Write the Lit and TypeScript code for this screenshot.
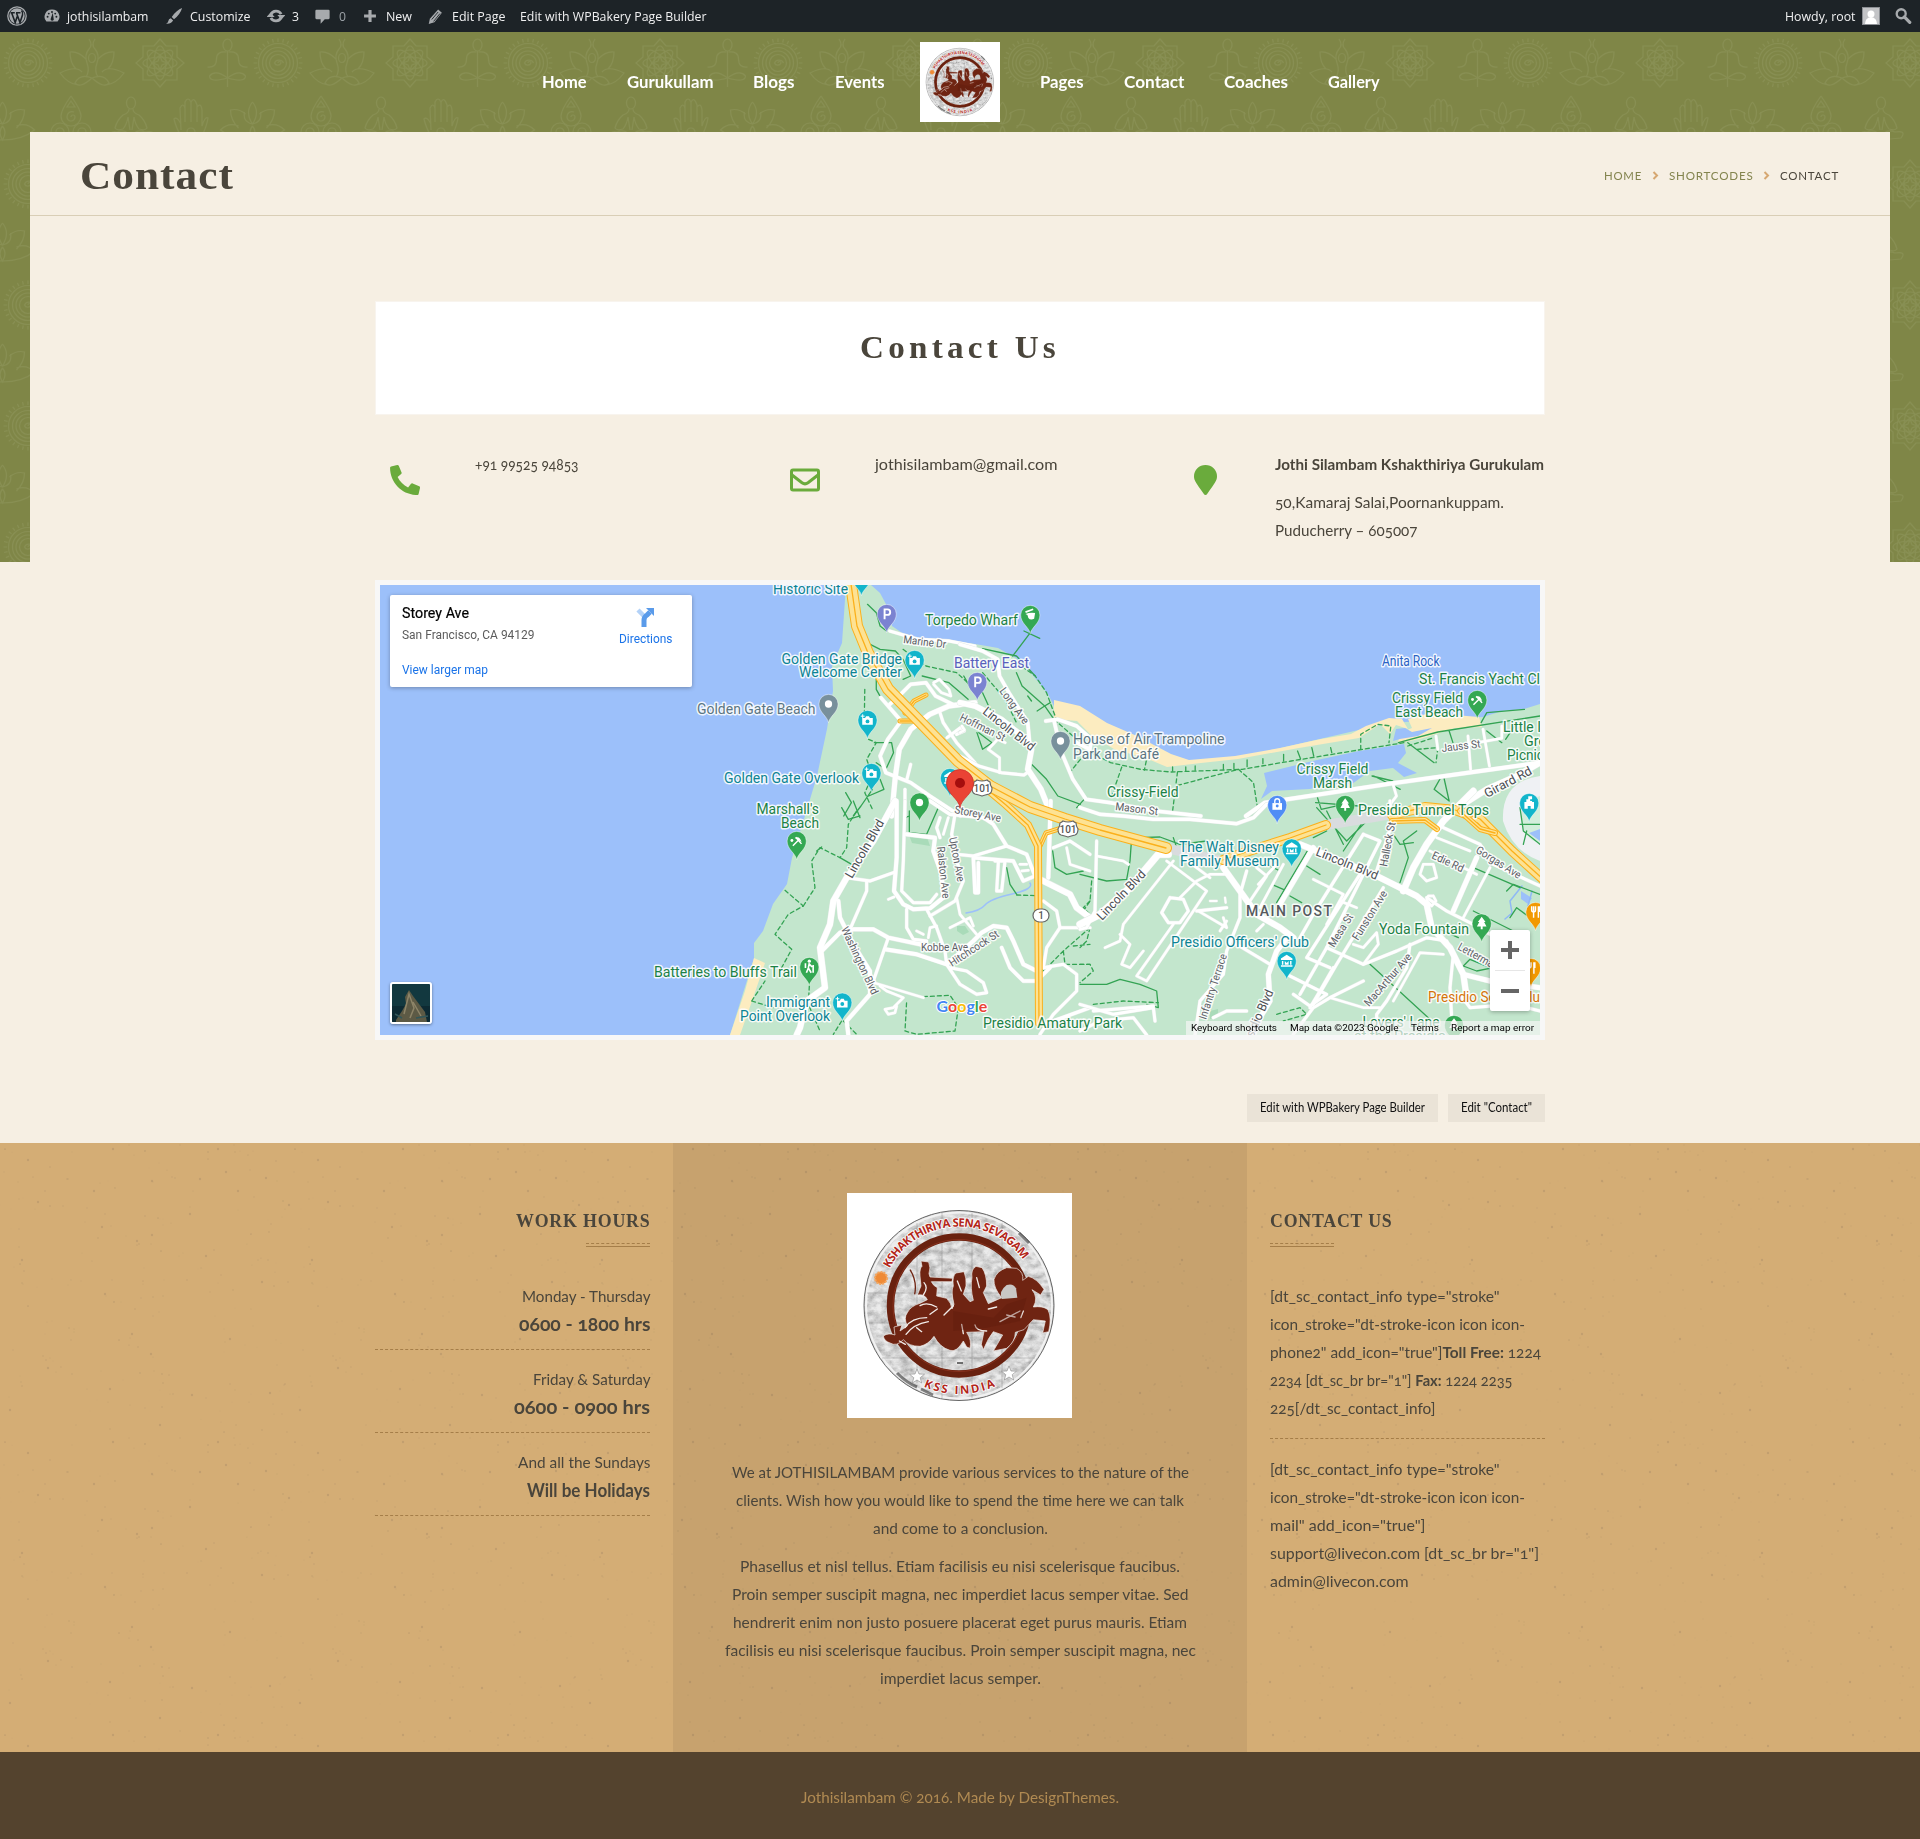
import { LitElement, html, svg, css } from "lit";
import { customElement, property } from "lit/decorators.js";

/** One line of text condensed or widened to a given measure. */
@customElement("fit-text")
class FitText extends LitElement {
  @property({ type: Number }) w = 100;
  static styles = css`
    :host { display: inline-block; white-space: pre; text-align: left; }
    .inner { display: inline-block; transform-origin: 0 50%; }
  `;
  render() {
    return html`<span class="inner"><slot></slot></span>`;
  }
  firstUpdated() {
    const el = this.renderRoot.querySelector(".inner") as HTMLElement;
    const natural = el.getBoundingClientRect().width;
    this.style.width = this.w + "px";
    if (natural > 0) el.style.transform = `scaleX(${this.w / natural})`;
  }
}

const fit = (text: unknown, w: number) => html`<fit-text .w=${w}>${text}</fit-text>`;

@customElement("seal-logo")
class SealLogo extends LitElement {
  static styles = css`
    :host { display: block; }
    svg { display: block; width: 100%; height: 100%; }
    .arc { font: 700 11.5px "Open Sans", "Noto Sans", sans-serif; fill: #b3261a; stroke: #fff; stroke-width: 1.6px; paint-order: stroke; }
  `;
  render() {
    return html`<svg viewBox="0 0 225 225">
      <defs>
        <filter id="stone" x="0" y="0" width="100%" height="100%">
          <feTurbulence type="fractalNoise" baseFrequency="0.11 0.16" numOctaves="5" seed="8" />
          <feColorMatrix values="0.9 0.9 0 0 -0.2  0.9 0.9 0 0 -0.2  0.9 0.9 0 0 -0.2  0 0 0 0 1" />
          <feComposite in2="SourceGraphic" operator="in" />
        </filter>
        <path id="top" d="M33.5 112 A78.5 78.5 0 0 1 190.5 112" />
        <path id="bottom" d="M23 112 A89 89 0 0 0 201 112" />
      </defs>
      <rect width="225" height="225" fill="#fff" />
      <circle cx="112" cy="112.5" r="95" fill="#bbb" filter="url(#stone)" />
      <circle cx="112" cy="112.5" r="95" fill="rgba(205,205,205,.4)" stroke="#666" stroke-width="1" />
      <circle cx="112" cy="112.5" r="93" fill="none" stroke="#f2f2f2" stroke-width="2" />
      <g fill="none" stroke="#666" stroke-width=".5" opacity=".6">
        <path d="M20 100 H205 M22 130 H202 M35 165 H188 M70 30 V190 M95 20 V205 M125 20 V205 M155 30 V195" />
      </g>
      <path d="M172 40L182 50M74 196L86 202M50 180Q60 190 70 194" stroke="#333" stroke-width="3" fill="none" opacity=".6" />
      <circle cx="112" cy="112.5" r="68.5" fill="none" stroke="#69210f" stroke-width="7.5" />
      <circle cx="112" cy="112.5" r="66" fill="none" stroke="#86301c" stroke-width="1" />
      <text class="arc"><textPath href="#top" startOffset="38" textLength="160">KSHAKTHIRIYA SENA SEVAGAM</textPath></text>
      <text class="arc"><textPath href="#bottom" startOffset="103" textLength="74">KSS INDIA</textPath></text>
      <circle cx="34" cy="85" r="6" fill="#ef8a35" stroke="#f3a55e" stroke-width="2" stroke-dasharray="2 1" />
      <path d="M183 65 A6.500 6.500 0 1 0 190 76 A6 6 0 0 1 183 65Z" fill="#f5f5f5" />
      <g fill="#fff" stroke="#888" stroke-width=".6">
        <path d="M70 176 l2 5 5.500 .2 -4.300 3.500 1.500 5.300 -4.700 -3 -4.700 3 1.500 -5.300 -4.300 -3.500 5.500 -.2Z" />
        <path d="M162 173 l2 5 5.500 .2 -4.300 3.500 1.500 5.300 -4.700 -3 -4.700 3 1.500 -5.300 -4.300 -3.500 5.500 -.2Z" />
      </g>
      <g transform="translate(-27 -22) scale(.33333)">
        <path fill="#6f2412" stroke="#f3eeec" stroke-width="2" stroke-linejoin="round"
          d="M190 495 Q205 484 225 492 L222 468 L246 462 L240 480 L262 465 Q250 440 262 425 Q272 405 300 397 L322 386 Q314 368 292 372 L303 345 L300 315 Q298 292 306 286 L303 270 L326 273 Q333 290 327 308 L330 318 L398 322 L396 332 L334 332 Q340 345 352 350 L350 375 L380 382 Q394 396 396 414 L402 400 Q392 360 400 345 Q396 315 408 306 L432 302 Q440 320 438 345 L430 370 L450 392 L460 388 Q450 350 456 320 Q452 296 468 286 L486 290 Q500 310 500 345 L490 365 L505 398 L545 380 Q520 350 522 325 Q530 300 560 290 L590 292 Q612 304 608 328 L625 316 Q650 322 672 355 L662 372 L636 356 Q656 380 640 408 Q668 404 684 416 Q696 440 686 482 L668 486 L676 450 L640 446 L612 476 L586 484 Q586 512 560 532 L520 540 L548 492 L520 482 Q505 500 490 536 L484 520 L492 482 L440 484 Q456 508 450 532 L440 528 L430 510 Q410 545 390 538 Q360 530 342 496 Q326 520 300 526 Q266 526 250 506 Q230 528 210 516 Q192 510 190 495Z" />
        <path d="M270 296 Q292 330 284 370" fill="none" stroke="#6f2412" stroke-width="4" />
        <path d="M560 342Q580 336 588 352L592 380 545 384Q536 360 560 342Z" fill="#c9c7c5" />
        <g fill="none" stroke="#f1ebe8" stroke-width="4" stroke-linecap="round">
          <path d="M255 470 Q275 440 320 440 M258 490 Q280 460 325 452 M300 404 Q320 392 350 408 M330 430 L352 414 M372 432 L400 404 M540 452 L600 420 M560 432 L585 438 M505 414 L530 408 M425 460 L430 488 M465 462 Q468 480 500 480 M290 470 L305 482 M312 335 Q326 350 310 372 M610 420 L602 440 M412 330 L424 360 M470 320 L478 350 M256 520 L238 510" />
        </g>
        <path fill="#5b1a0c" d="M400 420 L520 440 L560 400 L620 380 L600 450 L500 470 L400 480Z" opacity=".35" />
      </g>
      <path d="M110 170 h6" stroke="#444" stroke-width="1.500" />
    </svg>`;
  }
}

/* ---------- map ---------- */

interface Road { w: number; d: string; }
const W = "#ffffff";

const roadsNW: Road[] = [
  { w: 3, d: "1568 210 1500 195 1420 190 1345 165" },
  { w: 5, d: "1568 380 1500 390 1450 415 1400 460 1370 520 1360 600 1350 720" },
  { w: 3.5, d: "1322 365 1375 435 1340 490 1320 540 1335 590 1400 620 1450 660 1530 720" },
  { w: 3.5, d: "1345 385 1365 365 1400 325 1440 320 1465 360 1510 385" },
  { w: 2.5, d: "1460 320 1475 310 1500 340 1505 360 1480 350 1460 325" },
  { w: 3, d: "1385 720 1385 640" }, { w: 3, d: "1400 565 1390 610" },
  { w: 3, d: "1475 405 1485 440 1520 500 1568 560" },
  { w: 3, d: "1495 485 1530 455 1540 465 1520 475" },
];
const roadsNE: Road[] = [
  { w: 5.5, d: "0 380 40 390 110 430 165 480 190 520 180 580 215 640 240 710" },
  { w: 3.5, d: "0 205 60 225 100 250 105 300 130 350 180 440 185 500" },
  { w: 3.5, d: "228 435 260 430 310 450 350 490 345 520 310 500" },
  { w: 3.5, d: "250 435 270 530 300 610 335 670 400 680 520 705 640 720" },
  { w: 3, d: "0 540 50 570 110 590 170 597 185 585" },
  { w: 2.5, d: "105 590 105 545 75 520 100 490 120 500" },
  { w: 4, d: "760 720 810 680 870 670 1150 622 1541 560" },
  { w: 6, d: "1330 690 1400 640 1480 600 1541 560" },
  { w: 2.5, d: "1350 480 1357 580" }, { w: 2.5, d: "1390 460 1407 570" },
  { w: 2.5, d: "1265 480 1270 520" }, { w: 2.5, d: "1300 515 1440 487 1440 450" },
  { w: 2.5, d: "1150 622 1160 660 1140 690 1145 720" }, { w: 2.5, d: "0 470 12 462 5 450" },
];
const roadsSW: Road[] = [
  { w: 6, d: "765 0 700 120 620 230 580 300 570 370 540 440 550 520 555 560 500 600 480 680 470 702" },
  { w: 4, d: "770 0 770 170 762 270 790 310 820 325 870 322 910 290 905 220 880 150 885 110 800 100" },
  { w: 3, d: "795 0 790 180 785 270 820 305 870 305 890 280" },
  { w: 3.5, d: "870 0 930 40 1030 50 1060 70 1100 135 1160 160 1185 225 1150 240 1120 180 1000 170 1005 275 1015 275 1015 185" },
  { w: 3, d: "1065 180 1095 180 1085 270 1070 270 1075 185" },
  { w: 3, d: "945 40 935 100 950 160 1000 165 1100 135" },
  { w: 3, d: "940 150 970 240 945 300 870 345" },
  { w: 3, d: "900 50 890 80 900 110" }, { w: 2.5, d: "925 50 910 100" },
  { w: 3, d: "620 230 690 240 760 215" }, { w: 3, d: "680 240 680 270 630 385" },
  { w: 4, d: "595 300 600 350 640 430 690 510 690 580 620 660 625 702" },
  { w: 4, d: "545 450 600 395 640 385 700 385 745 410 840 430 900 445" },
  { w: 3, d: "745 410 700 540" },
  { w: 4, d: "735 445 830 460 920 490 1000 420 1025 395 1060 375 1100 380 1120 420 1150 490 1190 510" },
  { w: 3, d: "800 325 800 380 820 415 860 420" },
  { w: 3, d: "860 325 890 380 915 450 920 490 960 550 1010 580 1040 575 1030 545 980 510 930 500" },
  { w: 6, d: "1200 235 1290 280 1310 320 1350 350" },
  { w: 3, d: "1210 300 1250 330 1260 380 1220 440 1210 500" }, { w: 3, d: "1260 380 1350 380" },
  { w: 2.5, d: "950 290 960 340 1010 400" }, { w: 2.5, d: "930 380 990 350 1000 375" },
  { w: 2.5, d: "865 410 870 380 890 375" }, { w: 2.5, d: "830 390 850 400" },
  { w: 2.5, d: "700 545 850 590" }, { w: 4, d: "1232 0 1225 230" },
  { w: 3, d: "1240 140 1290 120 1350 160" }, { w: 2.5, d: "1280 140 1290 190 1350 210" },
  { w: 3, d: "1210 500 1270 490 1310 520 1310 570 1240 640 1200 700" },
  { w: 3.5, d: "1240 660 1350 620" }, { w: 3.5, d: "1085 440 1110 500 1150 540 1190 540 1230 500" },
  { w: 2.5, d: "720 555 740 570 790 590 760 620 735 625 745 640 765 635 770 615" },
  { w: 2.5, d: "1140 190 1160 190" }, { w: 2.5, d: "1145 210 1165 208" }, { w: 2.5, d: "745 295 762 288" },
];
const roadsSE: Road[] = [
  { w: 3.5, d: "0 20 60 40 130 45 220 55 330 55 470 68 520 50 560 10" },
  { w: 7, d: "265 160 235 160 205 195 150 260 60 340 0 370" },
  { w: 6, d: "430 200 480 270 530 340 600 380 640 410" },
  { w: 5, d: "700 140 600 310" },
  { w: 6, d: "660 130 760 170 890 225 1010 285 1040 310 1055 380 1110 440 1150 520 1160 590" },
  { w: 5, d: "1150 520 1230 540 1380 560" },
  { w: 6.5, d: "1180 -30 1090 60 1040 130 1000 200 970 270" },
  { w: 5, d: "630 400 590 450 565 520 570 600 540 650 520 702" },
  { w: 3, d: "50 120 45 330 20 380 0 385" }, { w: 2.5, d: "50 165 130 180 145 190" },
  { w: 2.5, d: "280 180 130 370 120 420 75 440" }, { w: 2.5, d: "260 180 380 270 200 540 170 525 280 370" },
  { w: 2.5, d: "310 170 390 230" }, { w: 2.5, d: "300 290 350 240 390 220 440 220" },
  { w: 3, d: "270 290 310 295 325 330 300 365 265 365 245 335 270 290" },
  { w: 2.5, d: "120 400 150 430 125 490 150 500 190 450" },
  { w: 3, d: "500 210 480 280 480 350 440 450 430 520 360 600 345 702" },
  { w: 2.5, d: "530 200 560 225 510 300" }, { w: 2.5, d: "610 190 540 320" }, { w: 2.5, d: "590 190 535 250" },
  { w: 3, d: "850 100 900 120 870 180 740 440 660 580" }, { w: 3, d: "850 100 700 340 660 410" },
  { w: 3, d: "840 220 680 470 750 500" }, { w: 3, d: "760 500 720 570 690 620" },
  { w: 2.5, d: "780 300 830 320" }, { w: 3, d: "910 260 770 490 700 610" },
  { w: 2.5, d: "700 235 790 280 740 370" }, { w: 3, d: "620 520 740 580 690 615 640 580" },
  { w: 3, d: "470 430 570 490" }, { w: 3, d: "740 440 850 490 950 450 1040 410 1100 420 1120 460 1110 560 1115 650" },
  { w: 3, d: "990 430 980 500 920 600 890 640 890 702" }, { w: 2.5, d: "820 430 850 440 890 395 895 430 850 490" },
  { w: 2.5, d: "1050 150 1190 220" }, { w: 3, d: "1090 80 1200 130 1240 190 1380 255" },
  { w: 2.5, d: "1070 110 1170 150" },
  { w: 5, d: "1190 170 1120 330" }, { w: 2.5, d: "1230 200 1150 350" },
  { w: 3, d: "1040 290 1100 330 1180 370 1230 400" },
  { w: 2.5, d: "1030 190 1060 190 1070 230 1040 240 1020 220 1030 190" },
  { w: 2.5, d: "1060 285 1068 300 1055 315 1040 300 1045 285 1060 285" },
  { w: 3, d: "1140 580 1170 620 1300 610 1380 630" },
  { w: 2.5, d: "750 590 850 620 900 620" }, { w: 2.5, d: "940 600 990 510 1020 455 1090 460" },
  { w: 3, d: "0 610 100 640 220 620 225 660" }, { w: 3, d: "0 690 60 660 160 650 200 702" },
  { w: 3, d: "40 630 220 615" }, { w: 3, d: "640 700 700 620 750 590 850 540" },
  { w: 3, d: "350 330 440 320" }, { w: 2.5, d: "355 330 440 380 430 350" }, { w: 2.5, d: "440 360 420 390" },
  { w: 3, d: "400 650 440 630 500 630" }, { w: 3, d: "930 0 935 70 890 210" },
  { w: 2.5, d: "550 370 530 390" }, { w: 2, d: "390 300 410 300" }, { w: 2, d: "435 290 437 305" },
];

const trails: { k: string; dash: boolean; d: string }[] = [
  { k: "nw", dash: false, d: "1287 85 1310 110 1320 150 1337 165" },
  { k: "nw", dash: false, d: "1285 200 1320 220 1360 225 1380 250 1400 300 1380 310" },
  { k: "nw", dash: true, d: "1380 220 1440 270 1520 290 1568 340" },
  { k: "nw", dash: false, d: "1430 300 1500 320 1550 370" },
  { k: "nw", dash: true, d: "1280 340 1279 410" },
  { k: "nw", dash: true, d: "1290 490 1310 500 1285 550 1300 600 1280 650 1300 700" },
  { k: "nw", dash: false, d: "1305 500 1350 500 1355 530 1335 580 1310 560" },
  { k: "nw", dash: false, d: "1230 650 1245 680 1225 720 M1300 640 1270 690 1250 720 M1320 610 1330 640 1290 660" },
  { k: "nw", dash: false, d: "1310 310 1310 340 1322 365" },
  { k: "ne", dash: false, d: "187 170 140 240 M170 165 212 187 M60 218 150 240 200 300" },
  { k: "ne", dash: false, d: "150 290 165 330 225 390 250 430 M225 390 205 405 M180 360 190 375 M225 390 240 380" },
  { k: "ne", dash: true, d: "150 260 200 300 230 350 256 430" },
  { k: "ne", dash: true, d: "60 290 120 370 150 440" },
  { k: "ne", dash: false, d: "10 300 30 340 60 350 80 400 M45 470 60 520 85 500 50 470" },
  { k: "ne", dash: true, d: "250 430 350 530 400 560 480 580 560 588 750 580 880 555 1070 520 1180 500" },
  { k: "ne", dash: true, d: "430 573 400 670 M578 588 565 705 M578 628 740 580 780 620 790 690 M495 555 490 582 M320 550 295 585" },
  { k: "ne", dash: true, d: "1065 520 1065 475 1110 445 1145 450 1140 500" },
  { k: "ne", dash: false, d: "565 585 565 573 M600 585 600 573 M625 583 625 570 M700 580 700 565 M728 578 728 562 M763 572 763 552 M805 563 805 548 M860 555 860 535 M905 548 897 525 M940 540 935 515 M988 530 985 515" },
  { k: "ne", dash: false, d: "190 565 230 610 260 660 320 685 M330 670 310 695" },
  { k: "ne", dash: false, d: "1165 500 1270 468 1541 420 M1385 440 1400 410 1500 400 M1400 465 1440 500 M1480 440 1450 490 M1300 465 1310 500 M1190 500 1260 560" },
  { k: "ne", dash: true, d: "1190 510 1260 485 M1215 520 1270 515 1265 560" },
  { k: "ne", dash: false, d: "1280 600 1260 640 1300 675 1285 600 M1100 600 1170 640 M1095 600 1150 615 M950 665 960 700 1040 680 M945 680 1060 690" },
  { k: "sw", dash: true, d: "435 268 490 315 445 340 405 400 455 445 425 500" },
  { k: "sw", dash: true, d: "490 315 525 260 515 180 540 140 600 170 620 140 625 70 650 30" },
  { k: "sw", dash: false, d: "605 20 625 55 660 45 M660 50 640 0 M530 150 545 138 M600 170 635 190" },
  { k: "sw", dash: true, d: "508 555 505 610 540 690 M605 660 580 700 M610 660 650 700 M335 600 375 540 M335 600 400 620" },
  { k: "sw", dash: true, d: "850 587 930 583 955 620 945 690 830 700 795 690 800 600" },
  { k: "sw", dash: false, d: "808 30 808 95 860 100 897 15 850 -5 M795 50 808 45" },
  { k: "sw", dash: false, d: "1100 200 1110 250 1130 280" }, { k: "sw", dash: true, d: "1130 282 1190 284" },
  { k: "sw", dash: false, d: "1238 150 1245 200 1280 220 1330 210" },
  { k: "sw", dash: true, d: "1350 380 1270 450 1210 510 M1270 450 1275 490 1350 490 M1350 300 1330 320 1350 340 M1300 435 1350 430" },
  { k: "se", dash: false, d: "0 220 80 240 140 235 150 180 155 110 M175 110 240 108 300 130 380 120 M280 110 290 140" },
  { k: "se", dash: true, d: "35 240 30 300 10 330 0 320 M30 380 20 420 0 440 M0 490 30 490 40 510 0 545" },
  { k: "se", dash: false, d: "0 550 80 550 120 535 180 550 230 570 235 620 200 610" },
  { k: "se", dash: true, d: "40 610 130 600 235 605" },
  { k: "se", dash: false, d: "685 145 590 305 M700 145 730 155 M680 195 720 220 M575 250 610 265 M630 285 665 305 M740 30 790 130 M710 20 800 120 900 20 M790 150 850 60 M560 190 600 210 M700 110 740 90" },
  { k: "se", dash: false, d: "1010 90 970 120 985 170 960 245 M940 100 960 130 1000 125 M870 490 1050 655 M1180 330 1300 390 M1180 200 1320 260 M1070 380 1135 410" },
  { k: "se", dash: false, d: "1280 270 1300 250 1380 280 M1290 350 1310 320 1350 350 M1150 495 1190 510 1240 500 M1150 495 1170 475 1230 500" },
  { k: "se", dash: true, d: "590 640 660 620 680 640 610 660" },
  { k: "se", dash: false, d: "1320 20 1330 90 1380 130 M1320 70 1380 70 M1340 90 1330 130" },
];

const GREEN = "#1c8246", TEAL = "#0d8494", GREY = "#5b7583", PURPLE = "#5860bd", ORANGE = "#d5740a", ROAD = "#5c6066";
type Label = [string, number, number, number, string, number?];
const places: Label[] = [
  ["Historic Site", 773, 593, 75, TEAL], ["Torpedo Wharf", 925, 624, 93, GREEN],
  ["Golden Gate Bridge", 781.5, 662.5, 120.5, TEAL], ["Welcome Center", 799, 676, 103, TEAL],
  ["Battery East", 954, 667, 75, PURPLE], ["Golden Gate Beach", 697, 713, 118.5, GREY],
  ["Golden Gate Overlook", 724, 782, 135, TEAL], ["Marshall's", 756.5, 812.5, 62.5, GREEN],
  ["Beach", 781, 826.5, 38, GREEN], ["Batteries to Bluffs Trail", 654, 976, 143, GREEN],
  ["Immigrant", 766, 1005.5, 64, TEAL], ["Point Overlook", 740, 1019.5, 90, TEAL],
  ["Presidio Amatury Park", 983, 1027, 139, GREEN], ["House of Air Trampoline", 1073, 743, 151.5, GREY],
  ["Park and Café", 1073, 757.5, 86, GREY], ["Anita Rock", 1382, 665, 57.5, "#2962c4"],
  ["St. Francis Yacht Cl", 1419, 683, 121, GREEN], ["Crissy Field", 1392, 702, 71, GREEN],
  ["East Beach", 1395, 716, 68, GREEN], ["Little I", 1503, 731, 38, GREEN], ["Gre", 1524, 745, 22, GREEN],
  ["Picnic", 1507, 759, 37, GREEN], ["Crissy Field", 1296.5, 773, 72, GREEN], ["Marsh", 1313, 787, 39, GREEN],
  ["Crissy-Field", 1107, 796, 71.5, GREEN], ["Presidio Tunnel Tops", 1358, 814, 131, GREEN],
  ["The Walt Disney", 1179, 851, 100, TEAL], ["Family Museum", 1180, 865, 99, TEAL],
  ["Presidio Officers' Club", 1171, 946, 138, TEAL], ["Yoda Fountain", 1379, 933, 90, GREEN],
  ["Presidio Social Clu", 1428, 1001, 112, ORANGE], ["Lovers' Lane", 1362.5, 1026, 77, GREEN],
  ["at the Presidio", 1354, 1040, 92, GREEN],
];
const streets: Label[] = [
  ["Marine Dr", 903, 642, 43, ROAD, 7], ["Long Ave", 999, 690, 42, ROAD, 54], ["Hoffman St", 959, 719, 49, ROAD, 26],
  ["Jauss St", 1442, 751, 39, ROAD, -7], ["Mason St", 1115, 809, 43, ROAD, 7], ["Storey Ave", 954, 812, 47, ROAD, 11],
  ["Upton Ave", 949, 837, 45, ROAD, 79], ["Ralston Ave", 937, 846, 52, ROAD, 84], ["Kobbe Ave", 921, 950, 47, ROAD, 0],
  ["Hitchcock St", 952, 966, 57, ROAD, -33], ["Washington Blvd", 841, 928, 73, ROAD, 65],
  ["Infantry Terrace", 1206, 1019, 68, ROAD, -72], ["Mesa St", 1334, 947, 37, ROAD, -58],
  ["Funston Ave", 1358, 940, 56, ROAD, -58], ["Halleck St", 1387, 866, 45, ROAD, -79], ["Edie Rd", 1431, 857, 34, ROAD, 25],
  ["Gorgas Ave", 1475, 851, 51, ROAD, 32], ["Letterma", 1457, 948, 39, ROAD, 29], ["MacArthur Ave", 1369, 1006, 66, ROAD, -49],
];
const avenues: Label[] = [
  ["Lincoln Blvd", 982, 712, 62, "#4a4d52", 38], ["Lincoln Blvd", 852, 878, 65, "#4a4d52", -60],
  ["Lincoln Blvd", 1102, 920, 64, "#4a4d52", -46], ["Lincoln Blvd", 1315, 854, 66, "#4a4d52", 22],
  ["Girard Rd", 1487, 797, 52, "#4a4d52", -28], ["Presidio Blvd", 1246, 1053, 68, "#4a4d52", -66],
];

const pinShape = "M0 19.500C-1.200 12.500-10 9-10 0A10 10 0 1 1 10 0C10 9 1.200 12.500 0 19.500Z";
const glyphs: Record<string, unknown> = {
  camera: svg`<path d="M-5.500-2h3l1-2h3l1 2h3v7h-11z" fill="#fff"/><circle cy="1.500" r="2" fill="#12b5cb"/><path d="M-5-6v4M-7-4h4" stroke="#fff" stroke-width="1"/>`,
  dot: svg`<circle r="3.800" fill="#fff"/>`,
  parking: svg`<path d="M-2.200 5.500V-4.800H.8A2.800 2.800 0 0 1 .8 .9H-2.200" fill="none" stroke="#fff" stroke-width="2"/>`,
  wharf: svg`<path d="M-5-3L3-6" stroke="#fff" stroke-width="1.800"/><path d="M-5-1Q0-3 5-2L4 4Q0 6-2 3L-3 0Z" fill="#fff"/>`,
  beach: svg`<path d="M-2-3Q3-6 5 1Z" fill="#fff"/><path d="M2-1L-4 5M-1-4L5 3" stroke="#fff" stroke-width="1.500"/><circle cx="-5" cy="-.5" r="1.500" fill="#fff"/>`,
  bag: svg`<path d="M-5-2H5V5H-5Z" fill="#fff"/><path d="M-2.500-2V-4A2.500 2.500 0 0 1 2.500-4V-2" fill="none" stroke="#fff" stroke-width="1.400"/><circle cy="1" r="1.500" fill="#4f8df5"/>`,
  tree: svg`<path d="M0-7L4-1.500H2.500L5 3H1V6H-1V3H-5L-2.500-1.500H-4Z" fill="#fff"/>`,
  museum: svg`<path d="M-6-2.500L0-6.500 6-2.500V-1H-6ZM-5 0H-3.500V4H-5ZM3.500 0H5V4H3.500ZM-6 4.500H6V6H-6ZM-2 4V0L0 2 2 0V4" fill="#fff"/>`,
  fort: svg`<path d="M-5 6V-1H-3V-4H-1V-7H3V-4H1V-2H3V-1H5V6H1.500V3H-1.500V6Z" fill="#fff"/>`,
  hiker: svg`<circle cx="0" cy="-6" r="1.700" fill="#fff"/><path d="M0-4L-1 1L-3 6M-1 1L2 6M0-3L3 0M4-2V6M-4-4L-4 1" fill="none" stroke="#fff" stroke-width="1.700"/>`,
  food: svg`<path d="M-4-6V-2A2 2 0 0 0 0-2V-6M-2-6V6M3-6V6M4-6V0" fill="none" stroke="#fff" stroke-width="1.500"/>`,
};
const CY = "#12b5cb", GN = "#34a853";
const pins: [number, number, string, string][] = [
  [861.5, 576, CY, "camera"], [886.7, 613, "#7b83d1", "parking"], [914.6, 659, CY, "camera"], [867.5, 719, CY, "camera"],
  [871.4, 772, CY, "camera"], [828.5, 703, "#78909c", "dot"], [977.3, 681, "#7b83d1", "parking"], [1030.3, 614, GN, "wharf"],
  [1060.5, 740, "#78909c", "dot"], [1477.3, 699, GN, "beach"], [1277.2, 804, "#4f8df5", "bag"], [1345.2, 804, GN, "tree"],
  [1529.2, 802, CY, "fort"], [950, 777, CY, "museum"], [919.5, 801.5, GN, "dot"], [796.7, 840, GN, "beach"],
  [809.3, 966, GN, "hiker"], [842.3, 1001.600, CY, "camera"], [1291.7, 847.5, CY, "museum"], [1286.7, 960, CY, "museum"],
  [1481.7, 922.5, GN, "tree"], [1535.500, 911, "#f29900", "food"], [1531, 967, "#f29900", "food"], [1454, 1024, GN, "tree"],
];

const frames: Record<string, string> = {
  nw: "translate(375 575) scale(.38265 .33333)", ne: "translate(960 575) scale(.37628 .33333)",
  sw: "translate(640 800) scale(.33333)", se: "translate(1080 800) scale(.33333)",
};
const hw101 = "M850 576 L852 590 L857 625 L868 652 L888 688 L926 727 L958 760 L990 785 L1030 806 L1065 818 L1100 829 L1166 847";
const hwEast = "M1223 859 L1252 849 L1290 837 L1326 824";
const hwFar = "M1392 814 L1425 806 L1455 809 L1480 818 L1512 850 L1545 880";
const hw1 = "M975 778 L1006 804 L1028 824 L1038 845 L1039 1022";

@customElement("area-map")
class AreaMap extends LitElement {
  static styles = css`
    :host { display: block; position: relative; width: 1160px; height: 450px; overflow: hidden; font-family: Roboto, sans-serif; font-variant-numeric: lining-nums; font-feature-settings: normal; }
    svg.canvas { display: block; }
    .line { fill: none; stroke-linejoin: round; stroke-linecap: round; vector-effect: non-scaling-stroke; }
    .lbl { font: 400 14px Roboto, sans-serif; stroke: rgba(255,255,255,.85); stroke-width: 3px; paint-order: stroke; stroke-linejoin: round; }
    .st { font-size: 11px; }
    .av { font-size: 12.5px; }
    .district { font-size: 14px; font-weight: 500; }
    .brand { font: 700 16px Lato, sans-serif; stroke: #fff; stroke-width: 2px; paint-order: stroke; }
    .shield { font: 500 10px Roboto, sans-serif; fill: #555; text-anchor: middle; }
    .card { position: absolute; left: 10px; top: 10px; width: 302px; height: 92px; box-sizing: border-box; background: #fff; border-radius: 2px; box-shadow: 0 1px 4px rgba(0,0,0,.3); padding: 9px 20px 0 12px; display: flex; justify-content: space-between; }
    .name { font-size: 14px; line-height: 18px; color: #000; -webkit-text-stroke: .2px #000; }
    .addr { font-size: 12px; line-height: 16px; color: #5b5b5b; margin-top: 5px; }
    .more { font-size: 12px; line-height: 16px; color: #1a73e8; margin-top: 19px; }
    .dir { display: flex; flex-direction: column; align-items: center; font-size: 12px; line-height: 16px; color: #1a73e8; padding-top: 3px; gap: 4px; }
    .zoom { position: absolute; left: 1110px; top: 345px; width: 40px; height: 81px; background: #fff; border-radius: 2px; box-shadow: 0 1px 4px rgba(0,0,0,.3); }
    .thumb { position: absolute; left: 10px; top: 397px; width: 38px; height: 38px; border: 2px solid #fff; border-radius: 3px; overflow: hidden; box-shadow: 0 1px 3px rgba(0,0,0,.4); }
    .legal { position: absolute; right: 0; bottom: 0; width: 354px; height: 14px; box-sizing: border-box; padding-left: 5px; background: rgba(245,245,245,.7); display: flex; font: 9.5px/14px Roboto, sans-serif; color: #000; }
    .legal .gap13 { margin-left: 13px; }
    .legal .gap12 { margin-left: 12px; }
  `;
  roads(list: Road[], frame: string) {
    return svg`<g transform=${frames[frame]}>${list.map(
      (r) => svg`<polyline class="line" points=${r.d} stroke="#e3eae6" stroke-width=${r.w + 0.8}></polyline>`,
    )}${list.map((r) => svg`<polyline class="line" points=${r.d} stroke=${W} stroke-width=${r.w}></polyline>`)}</g>`;
  }
  highway(d: string, w: number) {
    return svg`<path class="line" d=${d} stroke="#fbb01b" stroke-width=${w + 2}></path><path class="line" d=${d} stroke="#fde293" stroke-width=${w}></path><path class="line" d=${d} stroke="#fbb01b" stroke-width="1.300"></path>`;
  }
  label(l: Label, extra: string) {
    const [t, x, y, w, fill, rot] = l;
    return svg`<text class=${"lbl " + extra} fill=${fill} transform=${`translate(${x} ${y}) rotate(${rot ?? 0})`} textLength=${w} lengthAdjust="spacingAndGlyphs">${t}</text>`;
  }
  render() {
    return html`
      <svg class="canvas" width="1160" height="450" viewBox="380 584 1160 450">
        <rect x="380" y="584" width="1160" height="450" fill="#9cc0fa" />
        <path fill="#c3e6cd" d="M846 584L842 642 832 665 833 690 827 728 817 775 808 805 792 857 787 883 773 903 763 930 754 942V957L730 1034H1540V703L1524 708 1502 710 1483 716 1389 722 1238 757 1189 760 1107 735 1054 705 1048 693 1031 672 1016 657 998 647 975 643 949 640 911 638 892 625 887 605 880 592 871 584Z" />
        <path fill="#fcecc0" d="M754 957L765 962 752 1000 740 1034H730L745 990Z" />
        <path fill="#fcecc0" d="M1054 699L1080 705 1107 722 1137 735 1171 753 1189 759 1235 755 1280 747 1321 738 1351 733 1366 725 1389 717 1402 718 1408 728 1396 724 1390 733 1380 723 1359 737 1299 747 1238 758 1201 762 1167 766 1148 758 1114 748 1092 735 1077 720 1054 718Z" />
        <path fill="#fcecc0" d="M1408 718L1430 712 1479 716 1482 726 1455 727 1420 738 1398 742 1400 732 1412 727Z" />
        <path fill="#9cc0fa" d="M1264 772L1317 759 1359 750 1404 743 1406 752 1398 762 1417 772 1404 776 1393 767 1370 770 1352 783 1330 783 1310 788 1272 790 1261 798 1267 785ZM1393 740L1396 728 1405 727 1412 731 1432 727 1418 735 1400 738Z" />
        <path fill="#eff1f4" d="M1540 775Q1501 780 1503 820 1512 850 1540 860Z" />
        <path fill="#d3eedb" d="M1527 800a20 25 0 0 0 13 42V795Z" />
        <path fill="#9cc0fa" d="M1529 832L1540 828V840ZM1521 890L1532 897 1528 903 1521 898Z" />
        <path fill="#a9dbb9" d="M909 834L927 836 930 845 912 842ZM957 925l8 0 4 6-6 3-6-4ZM1210 1010l8-2v8l-8 2Z" />
        <path class="line" d="M966 912Q980 910 985 904T1012 893T1030 882" stroke="#9cc0fa" stroke-width="1.500" />
        <path class="line" d="M1505 918L1512 912 1510 900 1522 885M1532 890L1528 905" stroke="#8fb8f5" stroke-width="1.500" />
        ${trails.map((t) => svg`<g transform=${frames[t.k]}><path class="line" d=${"M" + t.d} stroke="#33a353" stroke-width="1.300" stroke-dasharray=${t.dash ? "4 3" : "none"}></path></g>`)}
        <path class="line" d="M1166 847L1222 860M1326 824L1392 813" stroke="#d9dcde" stroke-width="10" />
        ${this.roads(roadsNW, "nw")} ${this.roads(roadsNE, "ne")} ${this.roads(roadsSW, "sw")} ${this.roads(roadsSE, "se")}
        ${this.highway("M905 712L914 700 926 694M914 720L900 720M990 792L1020 798 1050 815M1040 845L1046 832 1065 826", 3)}
        ${this.highway(hw1, 6)} ${this.highway(hw101, 10)} ${this.highway(hwEast, 8)}
        ${this.highway(hwFar, 8)} ${this.highway("M1392 820L1425 819 1437 828M1460 810L1480 828 1495 832", 4)}
        ${streets.map((l) => this.label(l, "st"))} ${avenues.map((l) => this.label(l, "av"))}
        ${places.map((l) => this.label(l, ""))}
        <text class="lbl district" x="1246" y="915" textLength="86" fill="#55595e">MAIN POST</text>
        <g fill="#fff" stroke="#666" stroke-width="1.200">
          <path d="M974 781q2-1 3-2 5 2 10 0 1 1 3 2 0 3 2 6 0 5-3 6-4 1-7 2-3-1-7-2-3-1-3-6 2-3 2-6Z" />
          <path d="M1060 822q2-1 3-2 5 2 10 0 1 1 3 2 0 3 2 6 0 5-3 6-4 1-7 2-3-1-7-2-3-1-3-6 2-3 2-6Z" />
          <rect x="1033" y="908" width="16" height="13" rx="6.500" />
        </g>
        <text class="shield" x="982" y="790.500">101</text><text class="shield" x="1068" y="831.500">101</text>
        <text class="shield" x="1041" y="918">1</text>
        ${pins.map(([x, y, c, g]) => svg`<g transform=${`translate(${x} ${y}) scale(.96)`}><path d=${pinShape} fill=${c} stroke="rgba(255,255,255,.55)" stroke-width=".8"></path>${glyphs[g]}</g>`)}
        <path d="M960 806.500C958.500 797 946.500 793 946.500 782A13.500 13.500 0 1 1 973.500 782C973.500 793 961.500 797 960 806.500Z" fill="#ea4335" stroke="#d0342a" stroke-width=".8" />
        <circle cx="960" cy="782" r="5" fill="#a50e0e" />
        <text class="brand" x="936.500" y="1011"><tspan fill="#4285f4">G</tspan><tspan fill="#ea4335">o</tspan><tspan fill="#fbbc04">o</tspan><tspan fill="#4285f4">g</tspan><tspan fill="#34a853">l</tspan><tspan fill="#ea4335">e</tspan></text>
      </svg>
      <div class="card">
        <div>
          <div class="name">${fit("Storey Ave", 67)}</div>
          <div class="addr">${fit("San Francisco, CA 94129", 132.500)}</div>
          <div class="more">${fit("View larger map", 86)}</div>
        </div>
        <div class="dir">
          <svg width="20" height="20" viewBox="0 0 20 20">
            <path d="M3 3L10 10" stroke="#b3d2f8" stroke-width="4.500" />
            <path d="M9 20V13Q9 10 12 8L15 5" fill="none" stroke="#5a9bea" stroke-width="5" />
            <path d="M11 1H19V9Z" fill="#5a9bea" />
          </svg>
          ${fit("Directions", 53.500)}
        </div>
      </div>
      <div class="thumb">
        <svg width="38" height="38" viewBox="0 0 38 38">
          <rect width="38" height="38" fill="#12383f" /><rect y="22" width="38" height="16" fill="#0d2a33" />
          <path d="M4 36L10 27 14 20 13 13 17 6 21 12 27 20 33 28 35 38H4Z" fill="#5d5a45" />
          <path d="M12 30L17 10 22 24 18 34M21 18L29 32" fill="none" stroke="#8d8468" stroke-width="1.500" />
          <path d="M24 34L36 32M3 30L10 34" stroke="#33575a" stroke-width="1.500" />
        </svg>
      </div>
      <div class="zoom">
        <svg width="40" height="81" viewBox="0 0 40 81">
          <path d="M11 20H29M20 11V29M11 61H29" stroke="#666" stroke-width="4" /><path d="M5 40.500H35" stroke="#e6e6e6" />
        </svg>
      </div>
      <div class="legal">
        ${fit("Keyboard shortcuts", 86)}<span class="gap13">${fit("Map data ©2023 Google", 108.500)}</span>
        <span class="gap12">${fit("Terms", 28)}</span><span class="gap12">${fit("Report a map error", 83)}</span>
      </div>
    `;
  }
}

/* ---------- page ---------- */

const sunRays = Array.from({ length: 28 }, (_, i) => {
  const a = (i * Math.PI * 2) / 28, p = (r: number) => `${(r * Math.cos(a)).toFixed(1)} ${(r * Math.sin(a)).toFixed(1)}`;
  return `M${p(21)}L${p(24.500)}`;
}).join("");

const yogaPattern = svg`
  <pattern id="yoga" width="250" height="121" patternUnits="userSpaceOnUse">
    <g fill="none" stroke="#888f53" stroke-width="1.200">
      <g transform="translate(28 31)"><path d=${sunRays}></path><circle r="19.500"/><circle r="15.500"/><circle r="12"/><circle r="8.500"/><path d="M0 0a1.500 1.500 0 0 1 3 0a3.500 3.500 0 0 1-6.500 0a5 5 0 0 1 9 0"/></g>
      <g transform="translate(92 31)"><path d="M-3-24Q1-18-3-14-8-8-5 0-2 8-6 14M3-24Q-1-18 3-14 8-8 5 0 2 8 6 14"/><ellipse cy="-5" rx="3.500" ry="4.500"/><path d="M-6-4Q-14-12-22-11-22 0-16 6M6-4Q14-12 22-11 22 0 16 6M-10 9Q-16 2-32 10-24 21-14 22M10 9Q16 2 32 10 24 21 14 22M0 15Q-12 10-17 20-12 26 0 15 12 10 17 20 12 26 0 15"/></g>
      <g transform="translate(160 31)"><path d="M0-24L6-17 17-17 17-6 24 0 17 6 17 17 6 17 0 24-6 17-17 17-17 6-24 0-17-6-17-17-6-17Z"/>${[0, 45, 90, 135].map((a) => svg`<ellipse rx="6" ry="17" transform=${`rotate(${a})`}/>`)}<circle r="13"/><path d="M0-7L2-2 7 0 2 2 0 7-2 2-7 0-2-2Z"/></g>
      <g transform="translate(227.500 31)"><ellipse cy="-18" rx="4.500" ry="6"/><path d="M0-12V24M-1-11Q-11-12-11-4-11 5-20 4M1-11Q11-12 11-4 11 5 20 4M0 15Q-12 6-18 13-18 20 0 15 12 6 18 13 18 20 0 15"/></g>
      ${[2.500, 252.500].map((x) => svg`<g transform=${`translate(${x} 88)`}><path d="M0-18Q-8-8 0 4 8-8 0-18M-7-6Q-14-12-22-10-22 0-14 8M7-6Q14-12 22-10 22 0 14 8M0 4Q-10 2-8-8M0 4Q10 2 8-8M-14 6Q-24 2-32 10-20 20 0 20 20 20 32 10 24 2 14 6M0 6Q-5 12 0 20 5 12 0 6"/></g>`)}
      <g transform="translate(71 88)"><path d="M0-24Q-10-10-10-4A10 10 0 0 0 10-4Q10-10 0-24M-4-13H4L0-19ZM0-3a2 2 0 0 1 4 0a4 4 0 0 1-8 0a5 5 0 0 1 7-5"/><circle cx="-11" cy="12" r="9"/><circle cx="11" cy="12" r="9"/><circle cx="-11" cy="12" r="4"/><circle cx="11" cy="12" r="4"/></g>
      <g transform="translate(131 88)"><ellipse cy="-17" rx="4.500" ry="6"/><path d="M-2-11Q-2-7-8-5-14 0-16 8-14 11-8 9-4 4-3-3M2-11Q2-7 8-5 14 0 16 8 14 11 8 9 4 4 3-3M-3-3L-1 10M3-3L1 10M-14 12Q-4 8 0 18 4 8 14 12 26 10 20 18-20 22-24 18-20 10-14 12"/></g>
      <g transform="translate(191 88)"><path d="M-10 10L-11-12Q-8-18-6-12V2-18Q-3-24 0-18V2-18M0-18Q3-24 6-15V2M6-13Q10-18 11-10V6Q14-4 17-2 16 6 10 18H-9Q-15 8-17-1-14-4-10 4"/><circle cy="12" r="4"/></g>
    </g>
  </pattern>`;

const specks = (() => {
  let s = 12345;
  const rnd = () => (s = (s * 1103515245 + 12345) % 2147483648) / 2147483648;
  const big = [[33, 6], [72, 38], [110, 71], [120, 36], [138, 6], [146, 29], [158, 48], [186, 35], [238, 17], [209, 62], [248, 59], [22, 84], [57, 98], [72, 92], [126, 113], [232, 117], [182, 139], [25, 151], [52, 191], [71, 211], [150, 196], [112, 252], [30, 246], [258, 225], [80, 282], [220, 267], [190, 250], [14, 48]];
  const out = big.map(([x, y]) => ({ x, y, r: 1.200, o: 0.22 }));
  for (let i = 0; i < 190; i++) out.push({ x: Math.round(rnd() * 289), y: Math.round(rnd() * 292), r: 0.4 + rnd() * 0.5, o: 0.1 + rnd() * 0.14 });
  return out;
})();

const icon = (w: number, body: unknown, vb = "0 0 20 20") =>
  html`<svg class="ico" width=${w} height=${w} viewBox=${vb}>${body}</svg>`;

const adminIcons = {
  wp: svg`<circle cx="10" cy="10" r="9.200" fill="none" stroke="#a7aaad" stroke-width="1.300"/><circle cx="10" cy="10" r="7.700" fill="#a7aaad"/><path d="M3.500 6.800H7.800M9 6.800H13.500M4.700 7L8.200 16.500 10.200 10.500M9.500 7L13 16.500 15.500 9Q16.300 6.500 14.500 4.500" fill="none" stroke="#1d2327" stroke-width="1.600"/>`,
  dash: svg`<path d="M10 2A9 9 0 0 0 3 17H17A9 9 0 0 0 10 2Z" fill="#a7aaad"/><g fill="#1d2327"><circle cx="10" cy="5" r="1.200"/><circle cx="6" cy="7" r="1.200"/><circle cx="14" cy="7" r="1.200"/><circle cx="4.500" cy="11" r="1.200"/><circle cx="15.500" cy="11" r="1.200"/><path d="M11 6L12 13A2 2 0 1 1 8.500 13Z"/></g>`,
  brush: svg`<path d="M19 1Q13 3 7.500 11L10 13.500Q17 8 19 1ZM6.500 12.500Q4 13 3.500 16 3 18 1 18.500 6 19.500 9 15Z" fill="#a7aaad"/>`,
  update: svg`<path d="M4.300 8.500A6.300 6.300 0 0 1 15.700 8M15.700 11.500A6.300 6.300 0 0 1 4.300 12" fill="none" stroke="#a7aaad" stroke-width="3.200"/><path d="M11.500 9H20.500L16 14ZM8.500 11H-.5L4 6Z" fill="#a7aaad"/>`,
  comment: svg`<path d="M2 1H18A1.500 1.500 0 0 1 19.500 2.500V12A1.500 1.500 0 0 1 18 13.500H13L7.500 19.500V13.500H2A1.500 1.500 0 0 1 .5 12V2.500A1.500 1.500 0 0 1 2 1Z" fill="#a7aaad"/>`,
  plus: svg`<path d="M10 1.500V18.500M1.500 10H18.500" stroke="#a7aaad" stroke-width="4.500"/>`,
  pencil: svg`<path d="M13.500 .5L18.500 5 8.500 17.500 1 20 2.500 13Z" fill="#a7aaad"/><path d="M5 14L13.500 4M7.500 16.500L16 6" stroke="#1d2327" stroke-width="1.200"/>`,
  search: svg`<circle cx="8" cy="7.500" r="5" fill="none" stroke="#a7aaad" stroke-width="2.600"/><path d="M11.500 11L17.500 17" stroke="#a7aaad" stroke-width="3.600" stroke-linecap="round"/>`,
};

const menu = {
  left: [["Home", 44.500], ["Gurukullam", 86.500], ["Blogs", 41.500], ["Events", 49.500]] as [string, number][],
  right: [["Pages", 43.500], ["Contact", 60.500], ["Coaches", 64], ["Gallery", 51.500]] as [string, number][],
};
const hours: [string, number, string, number][] = [
  ["Monday - Thursday", 128.500, "0600 - 1800 hrs", 131.500],
  ["Friday & Saturday", 117.500, "0600 - 0900 hrs", 136],
  ["And all the Sundays", 132.500, "Will be Holidays", 123],
];

@customElement("app-root")
class AppRoot extends LitElement {
  static styles = css`
    :host { display: block; width: 1920px; height: 1839px; position: relative; overflow: hidden; background: #f6efe3; color: #4a453b; font: 16px/28px Lato, "Open Sans", sans-serif; font-variant-numeric: oldstyle-nums; font-feature-settings: "onum"; }
    svg { flex: none; }
    .admin { height: 32px; box-sizing: border-box; padding: 0 8px 0 7px; background: #1d2327; color: #f0f0f1; font: 13px/32px "Open Sans", "Noto Sans", sans-serif; display: flex; align-items: center; font-variant-numeric: lining-nums; font-feature-settings: normal; }
    .item { display: flex; align-items: center; gap: 7px; margin-right: 16.5px; height: 32px; }
    .item.wide { gap: 9px; }
    .item.dim { color: #9ca2a7; }
    .item.last { margin-right: 14px; }
    .item.tight { margin-right: 14.5px; }
    .grow { flex: 1; }
    .avatar { width: 16px; height: 16px; border: 1px solid #8c8f94; background: #c3c4c7; }
    .backdrop { position: absolute; left: 0; top: 32px; z-index: -1; }
    .wrap { position: relative; z-index: 0; }
    .nav { height: 100px; display: flex; justify-content: center; align-items: center; color: #fff; font-weight: 700; font-size: 17.5px; }
    .menu { display: flex; gap: 40px; width: 377px; }
    .menu.left { justify-content: flex-end; margin-right: 36px; }
    .menu.right { margin-left: 40px; width: 373px; }
    .nav .small { width: 80px; height: 80px; }
    .panel { margin: 0 30px; background: #f6efe3; }
    .titlebar { height: 84px; box-sizing: border-box; border-bottom: 1px solid #d9ceb6; padding: 0 51px 0 50px; display: flex; align-items: center; justify-content: space-between; }
    .title { font: 700 41px/50px "Liberation Serif", serif; letter-spacing: 1px; margin: 0; padding-top: 3px; }
    .crumbs { display: flex; align-items: center; font-size: 12px; letter-spacing: .8px; line-height: 20px; color: #83844e; padding-top: 4px; }
    .crumbs svg { margin: 0 10px; }
    .crumbs .here { color: #4a453b; }
    .container { width: 1170px; margin: 0 auto; padding: 85px 0 20px; }
    .hero { height: 114px; box-sizing: border-box; background: #fff; border: 1px solid #f8f4ee; text-align: center; padding-top: 26px; }
    .hero h2 { margin: 0; font: 700 31px/40px "Liberation Serif", serif; letter-spacing: 4px; }
    .info { display: grid; grid-template-columns: repeat(3, 370px); column-gap: 30px; margin-top: 35px; height: 95px; }
    .cell { display: grid; grid-template-columns: 60px 270px; column-gap: 40px; align-items: start; }
    .cell .pic { height: 60px; display: flex; align-items: center; justify-content: center; }
    .cell p { margin: 0; height: 28px; }
    .cell p.strong { font-weight: 700; margin-bottom: 10px; }
    .map { margin-top: 35px; padding: 5px; background: #f7f7f7; }
    .edits { display: flex; justify-content: flex-end; gap: 10px; margin-top: 54px; font-size: 12.500px; line-height: 28px; color: #111; }
    .edits span { height: 28px; padding: 0 13px; background: #eae3d7; }
    .footer { position: relative; height: 609px; background: #d4ad75; margin-top: 1px; }
    .grain { position: absolute; inset: 0; }
    .cols { position: relative; width: 1170px; margin: 0 auto; display: grid; grid-template-columns: 275px 23px 574px 23px 275px; height: 609px; }
    .col { padding-top: 62px; }
    .col.hours { text-align: right; }
    .col h3 { margin: 0; font: 700 18px/32px "Liberation Serif", serif; letter-spacing: .8px; height: 38px; }
    .rule { width: 64px; height: 2px; border-top: 1px dashed #a57e49; border-bottom: 1px solid #a57e49; margin-bottom: 35px; }
    .hours .rule { margin-left: auto; }
    .slot { height: 67px; border-bottom: 1px dashed #a57e49; margin-bottom: 15px; }
    .slot p, .code p { margin: 0; height: 28px; }
    .slot p.big { font-size: 18px; font-weight: 700; }
    .code.first { border-bottom: 1px dashed #a57e49; padding-bottom: 16px; margin-bottom: 16px; }
    .about { background: rgba(0,0,0,.06); text-align: center; padding-top: 50px; }
    .about .large { width: 225px; height: 225px; margin: 0 0 40px 174px; }
    .about p { margin: 0 0 10px; }
    .about p span { display: block; height: 28px; }
    .bottom { height: 88px; background: #54432e; color: #b08a52; display: flex; align-items: center; justify-content: center; padding-top: 1px; box-sizing: border-box; }
  `;
  render() {
    const chevron = html`<svg width="7" height="9" viewBox="0 0 7 9"><path d="M1.500 1L5 4.500 1.500 8" fill="none" stroke="#d6a771" stroke-width="2" /></svg>`;
    return html`<div class="wrap">
      <svg class="backdrop" width="1920" height="530">
        <defs>${yogaPattern}</defs>
        <rect width="1920" height="530" fill="#7f8647" /><rect width="1920" height="530" fill="url(#yoga)" />
      </svg>
      <div class="admin">
        <span class="item">${icon(20, adminIcons.wp)}</span>
        <span class="item">${icon(16, adminIcons.dash)}${fit("jothisilambam", 81.500)}</span>
        <span class="item">${icon(18, adminIcons.brush)}${fit("Customize", 60.500)}</span>
        <span class="item">${icon(18, adminIcons.update)}${fit("3", 7)}</span>
        <span class="item wide dim">${icon(15, adminIcons.comment)}${fit("0", 7)}</span>
        <span class="item wide">${icon(14, adminIcons.plus)}${fit("New", 26)}</span>
        <span class="item wide tight">${icon(15, adminIcons.pencil)}${fit("Edit Page", 53.500)}</span>
        <span class="item">${fit("Edit with WPBakery Page Builder", 186.500)}</span>
        <span class="grow"></span>
        <span class="item last">${fit("Howdy, root", 70.500)}
          <svg class="avatar" viewBox="0 0 16 16"><circle cx="8" cy="6" r="3.500" fill="#fff" /><path d="M2 16Q2 10 8 9 14 10 14 16Z" fill="#fff" /></svg></span>
        ${icon(18, adminIcons.search)}
      </div>
      <div class="nav">
        <div class="menu left">${menu.left.map(([t, w]) => fit(t, w))}</div>
        <seal-logo class="small"></seal-logo>
        <div class="menu right">${menu.right.map(([t, w]) => fit(t, w))}</div>
      </div>
      <div class="panel">
        <div class="titlebar">
          <h1 class="title">${fit("Contact", 154)}</h1>
          <div class="crumbs">${fit("HOME", 38)}${chevron}${fit("SHORTCODES", 84.500)}${chevron}<span class="here">${fit("CONTACT", 59)}</span></div>
        </div>
        <div class="container">
          <div class="hero"><h2>${fit("Contact Us", 200)}</h2></div>
          <div class="info">
            <div class="cell">
              <div class="pic"><svg width="30" height="30" viewBox="0 0 512 512"><path fill="#6aab3c" d="M18.900 24.600L122.900.6C134.200-2 145.800 3.900 150.400 14.500L198.400 126.500C202.600 136.300 199.800 147.800 191.500 154.500L130.900 204.100C167.700 282.100 230.800 345 309.900 382.100L359.500 321.500C366.300 313.200 377.700 310.400 387.500 314.600L499.500 362.600C510.100 367.300 516 378.900 513.400 390.200L489.400 494.200C486.900 505 477.300 512.800 466 512.800 210 512.800 2 305 2 48 2 36.800 8 27 18.900 24.600Z" transform="translate(-1 0)" /></svg></div>
              <p>${fit("+91 99525 94853", 103.500)}</p>
            </div>
            <div class="cell">
              <div class="pic"><svg width="30" height="24" viewBox="0 0 30 24"><rect x="1.500" y="2" width="27" height="20" rx="1.500" fill="none" stroke="#6aab3c" stroke-width="3" /><path d="M2 7L12 14.800Q15 17 18 14.800L28 7" fill="none" stroke="#6aab3c" stroke-width="3" /></svg></div>
              <p>${fit("jothisilambam@gmail.com", 182.500)}</p>
            </div>
            <div class="cell">
              <div class="pic"><svg width="23" height="30" viewBox="0 0 23 30"><path d="M11.500 30Q10.500 30 9.500 28.500C2.500 18.500 0 16 0 11.300A11.500 11.300 0 0 1 23 11.300C23 16 20.500 18.500 13.500 28.500Q12.500 30 11.500 30Z" fill="#6aab3c" /></svg></div>
              <div><p class="strong">${fit("Jothi Silambam Kshakthiriya Gurukulam", 269)}</p><p>${fit("50,Kamaraj Salai,Poornankuppam.", 229)}</p><p>${fit("Puducherry – 605007", 142.500)}</p></div>
            </div>
          </div>
          <div class="map"><area-map></area-map></div>
          <div class="edits"><span>${fit("Edit with WPBakery Page Builder", 165)}</span><span>${fit('Edit "Contact"', 71)}</span></div>
        </div>
      </div>
      <div class="footer">
        <svg class="grain" width="1920" height="609">
          <defs><pattern id="paper" width="290" height="293" patternUnits="userSpaceOnUse" patternTransform="translate(80 0)">
            ${specks.map((p) => svg`<circle cx=${p.x} cy=${p.y} r=${p.r} fill="#7d6a55" opacity=${p.o}></circle>`)}
          </pattern></defs>
          <rect width="1920" height="609" fill="url(#paper)" />
        </svg>
        <div class="cols">
          <div class="col hours">
            <h3>${fit("WORK HOURS", 134.500)}</h3><div class="rule"></div>
            ${hours.map(([a, aw, b, bw]) => html`<div class="slot"><p>${fit(a, aw)}</p><p class="big">${fit(b, bw)}</p></div>`)}
          </div>
          <span></span>
          <div class="about">
            <seal-logo class="large"></seal-logo>
            <p><span>${fit("We at JOTHISILAMBAM provide various services to the nature of the", 457)}</span><span>${fit("clients. Wish how you would like to spend the time here we can talk", 448)}</span><span>${fit("and come to a conclusion.", 175)}</span></p>
            <p><span>${fit("Phasellus et nisl tellus. Etiam facilisis eu nisi scelerisque faucibus.", 440)}</span><span>${fit("Proin semper suscipit magna, nec imperdiet lacus semper vitae. Sed", 456.500)}</span><span>${fit("hendrerit enim non justo posuere placerat eget purus mauris. Etiam", 454)}</span><span>${fit("facilisis eu nisi scelerisque faucibus. Proin semper suscipit magna, nec", 471)}</span><span>${fit("imperdiet lacus semper.", 161)}</span></p>
          </div>
          <span></span>
          <div class="col">
            <h3>${fit("CONTACT US", 122.500)}</h3><div class="rule"></div>
            <div class="code first">
              <p>${fit('[dt_sc_contact_info type="stroke"', 229.500)}</p><p>${fit('icon_stroke="dt-stroke-icon icon icon-', 255)}</p>
              <p>${fit(html`phone2" add_icon="true"]<b>Toll Free:</b> 1224`, 271)}</p>
              <p>${fit(html`2234 [dt_sc_br br="1"] <b>Fax:</b> 1224 2235`, 242.500)}</p><p>${fit("225[/dt_sc_contact_info]", 165.500)}</p>
            </div>
            <div class="code">
              <p>${fit('[dt_sc_contact_info type="stroke"', 229.500)}</p><p>${fit('icon_stroke="dt-stroke-icon icon icon-', 255)}</p><p>${fit('mail" add_icon="true"]', 155.500)}</p>
              <p>${fit('support@livecon.com [dt_sc_br br="1"]', 269)}</p><p>${fit("admin@livecon.com", 138.500)}</p>
            </div>
          </div>
        </div>
      </div>
      <div class="bottom">${fit("Jothisilambam © 2016. Made by DesignThemes.", 318)}</div>
    </div>`;
  }
}
